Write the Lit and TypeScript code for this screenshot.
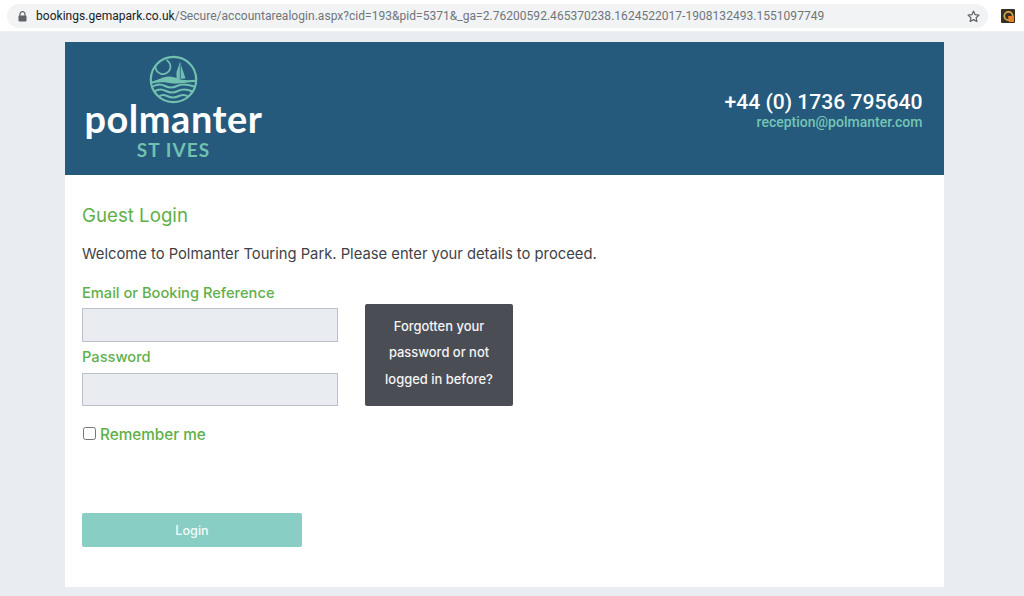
import { LitElement, html, css } from "lit";
import { customElement } from "lit/decorators.js";

@customElement("app-root")
export class AppRoot extends LitElement {
  static styles = css`
    :host { display: block; width: 1024px; height: 596px; overflow: hidden; background: #e9ecf1; font-family: Inter, "Liberation Sans", sans-serif; }
    .chrome { height: 32px; background: #fff; display: flex; align-items: center; box-sizing: border-box; padding: 1px 0 0 7px; border-bottom: 1px solid #eef0f3; }
    .pill { width: 981px; height: 24px; border-radius: 12px; background: #f1f3f4; display: flex; align-items: center; box-sizing: border-box; padding: 0 7px 0 11px; flex: none; }
    .lock { width: 9px; height: 11px; margin-right: 9px; flex: none; }
    .url { font: 12px/16px Roboto, sans-serif; letter-spacing: 0.035px; color: #70757a; white-space: nowrap; flex: 1; }
    .url b { font-weight: 400; color: #202124; }
    .star { width: 15px; height: 15px; flex: none; }
    .ext { width: 14px; height: 14px; margin-left: 13px; flex: none; }
    .card { width: 879px; margin: 10px 0 0 65px; height: 545px; background: #fff; display: flex; flex-direction: column; }
    .head { height: 133px; flex: none; background: #265a7c; display: flex; justify-content: space-between; box-sizing: border-box; padding: 13px 21.5px 0 20px; }
    .logo { width: 177px; display: flex; flex-direction: column; align-items: center; }
    .logo svg { width: 49px; height: 49px; flex: none; }
    .brand { font: 700 37.9px/36px Lato, sans-serif; color: #fff; letter-spacing: 0.55px; margin-top: -3px; white-space: nowrap; }
    .place { font: 700 19px/20px Lato, sans-serif; color: #72c0b0; letter-spacing: 1.05px; margin-top: 3px; white-space: nowrap; }
    .contact { text-align: right; padding-top: 35px; font-family: Roboto, sans-serif; font-weight: 500; }
    .phone { font-size: 21.1px; line-height: 24px; color: #fff; }
    .mail { font-size: 14px; line-height: 16px; color: #74c5b5; }
    .body { padding: 29px 17px 0; flex: 1; }
    h1 { margin: 0; font-size: 18.7px; line-height: 24px; font-weight: 400; color: #5fb04a; }
    .intro { margin: 15px 0 0; font-size: 14.77px; line-height: 22px; color: #3f4248; }
    .form { display: flex; gap: 27px; margin-top: 19px; align-items: flex-start; }
    .fields { width: 256px; }
    label { display: block; font-size: 14.67px; line-height: 18px; font-weight: 500; color: #5fb04a; }
    .field { height: 34px; box-sizing: border-box; background: #e9ecf1; border: 1px solid #bcbfcc; }
    .f1 { margin-top: 6px; }
    .l2 { margin-top: 6px; }
    .f2 { margin-top: 7px; height: 33px; }
    .forgot { width: 148px; height: 102px; margin-top: 20px; box-sizing: border-box; background: #4b4d55; border-radius: 2px; color: #f4f4f4; font-size: 12.95px; font-weight: 500; line-height: 26.4px; text-align: center; padding-top: 9px; }
    .remember { display: flex; align-items: center; gap: 4px; margin-top: 20px; }
    .box { width: 13px; height: 13px; box-sizing: border-box; border: 1px solid #767676; border-radius: 2.5px; background: #fff; flex: none; margin: 0 0 3px 1px; }
    .remember span { font-size: 15.3px; line-height: 18px; font-weight: 500; color: #5fb04a; }
    .login { margin-top: 69px; width: 220px; height: 34px; border-radius: 2px; background: #88cec4; color: #f2fbf9; font-size: 12.6px; font-weight: 500; display: flex; align-items: center; justify-content: center; }
  `;

  render() {
    return html`
      <div class="chrome">
        <div class="pill">
          <svg class="lock" viewBox="0 0 9 11"><path d="M2 5V3.2a2.5 2.5 0 0 1 5 0V5" fill="none" stroke="#5f6368" stroke-width="1.2"/><rect x="0.5" y="4.5" width="8" height="6" rx="1" fill="#5f6368"/></svg>
          <span class="url"><b>bookings.gemapark.co.uk</b>/Secure/accountarealogin.aspx?cid=193&amp;pid=5371&amp;_ga=2.76200592.465370238.1624522017-1908132493.1551097749</span>
          <svg class="star" viewBox="0 0 24 24"><path d="M12 3.5l2.6 5.6 6.1.7-4.5 4.2 1.2 6L12 17l-5.4 3 1.2-6-4.5-4.2 6.1-.7z" fill="none" stroke="#5f6368" stroke-width="2" stroke-linejoin="round"/></svg>
        </div>
        <svg class="ext" viewBox="0 0 14 14"><rect width="14" height="14" rx="1" fill="#33302a"/><circle cx="7.5" cy="7" r="4.2" fill="none" stroke="#d9a441" stroke-width="1.8"/><path d="M7 7h6v6H8z" fill="#ee7d22"/></svg>
      </div>
      <div class="card">
        <div class="head">
          <div class="logo">
            <svg viewBox="0 0 49 49" fill="none" stroke="#72c0b0">
              <circle cx="24.5" cy="24.5" r="22.7" stroke-width="2.2"/>
              <path d="M6.5 10.5 A7.5 7.5 0 1 0 17.5 5" stroke-width="1.8"/>
              <path d="M27.5 24 L27.5 17 L31 7 L36.5 23.5Z" fill="#72c0b0" stroke="none"/>
              <path d="M31.3 9.5V23.5" stroke="#265a7c" stroke-width="0.8"/>
              <path d="M2.5 26.5 C9 25.5 13 21.5 20 21.5 C26 21.5 29 24.5 35 25 C39 25.3 43 25 46.5 24.8 L46.3 27 C39 27 34 28.6 28 28.6 C21 28.6 18 26.8 12 27.2 C8 27.5 5 28 3 28.6Z" fill="#72c0b0" stroke="none"/>
              <path d="M4 31.5 C8 29 12 29 16 31 C20 33 24 33 28 31 C32 29 38 29 45 31.5" stroke-width="2"/>
              <path d="M5.5 36.5 C9 34 13 34 17 36 C21 38 25 38 29 36 C33 34 38 34 43.5 36.5" stroke-width="2"/>
              <path d="M10 41.5 C12.5 39.5 15 39.5 18 41 C22 43 26 43 30 41 C33.5 39.5 36 39.5 39 41.5" stroke-width="2"/>
            </svg>
            <div class="brand">polmanter</div>
            <div class="place">ST IVES</div>
          </div>
          <div class="contact">
            <div class="phone">+44 (0) 1736 795640</div>
            <div class="mail">reception@polmanter.com</div>
          </div>
        </div>
        <div class="body">
          <h1>Guest Login</h1>
          <p class="intro">Welcome to Polmanter Touring Park. Please enter your details to proceed.</p>
          <div class="form">
            <div class="fields">
              <label>Email or Booking Reference</label>
              <div class="field f1"></div>
              <label class="l2">Password</label>
              <div class="field f2"></div>
            </div>
            <div class="forgot">Forgotten your<br />password or not<br />logged in before?</div>
          </div>
          <div class="remember"><div class="box"></div><span>Remember me</span></div>
          <div class="login">Login</div>
        </div>
      </div>
    `;
  }
}
